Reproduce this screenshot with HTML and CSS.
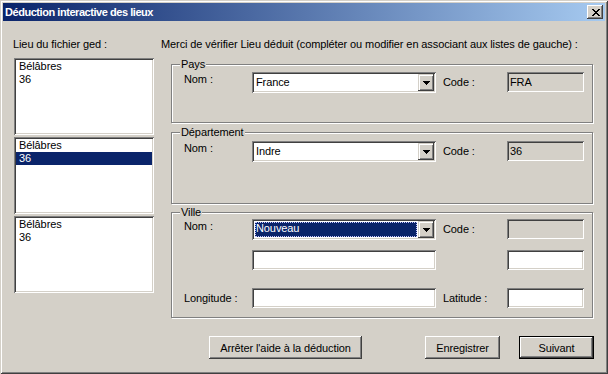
FILE: index.html
```html
<!DOCTYPE html>
<html lang="fr">
<head>
<meta charset="utf-8">
<title>Déduction interactive des lieux</title>
<link rel="stylesheet" href="styles.css">
</head>
<body>
<div class="window">
  <div class="titlebar">
    <span class="title">Déduction interactive des lieux</span>
    <div class="close">
      <svg width="8" height="7" viewBox="0 0 8 7" shape-rendering="crispEdges"><path d="M0 0h2v1H0zM6 0h2v1H6zM1 1h2v1H1zM5 1h2v1H5zM2 2h4v1H2zM3 3h2v1H3zM2 4h4v1H2zM1 5h2v1H1zM5 5h2v1H5zM0 6h2v1H0zM6 6h2v1H6z" fill="#000"/></svg>
    </div>
  </div>
  <div class="content">
    <div class="labels">
      <span class="lbl-left">Lieu du fichier ged :</span>
      <span class="lbl-right">Merci de vérifier Lieu déduit (compléter ou modifier en associant aux listes de gauche) :</span>
    </div>
    <div class="main">
      <div class="lists">
        <div class="listbox"><div class="item">Bélâbres</div><div class="item">36</div></div>
        <div class="listbox"><div class="item">Bélâbres</div><div class="item selected">36</div></div>
        <div class="listbox"><div class="item">Bélâbres</div><div class="item">36</div></div>
      </div>
      <div class="groups">
        <div class="group group-pays">
          <span class="legend">Pays</span>
          <div class="row">
            <span class="lbl nom">Nom :</span>
            <div class="combo"><span class="combo-text">France</span><span class="combo-btn"><svg width="7" height="4" viewBox="0 0 7 4" shape-rendering="crispEdges"><path d="M0 0h7v1H0zM1 1h5v1H1zM2 2h3v1H2zM3 3h1v1H3z" fill="#000"/></svg></span></div>
            <span class="lbl code">Code :</span>
            <div class="field readonly">FRA</div>
          </div>
        </div>
        <div class="group group-dept">
          <span class="legend">Département</span>
          <div class="row">
            <span class="lbl nom">Nom :</span>
            <div class="combo"><span class="combo-text">Indre</span><span class="combo-btn"><svg width="7" height="4" viewBox="0 0 7 4" shape-rendering="crispEdges"><path d="M0 0h7v1H0zM1 1h5v1H1zM2 2h3v1H2zM3 3h1v1H3z" fill="#000"/></svg></span></div>
            <span class="lbl code">Code :</span>
            <div class="field readonly">36</div>
          </div>
        </div>
        <div class="group group-ville">
          <span class="legend">Ville</span>
          <div class="row">
            <span class="lbl nom">Nom :</span>
            <div class="combo"><span class="combo-text selected-text"><span class="focus">Nouveau</span></span><span class="combo-btn"><svg width="7" height="4" viewBox="0 0 7 4" shape-rendering="crispEdges"><path d="M0 0h7v1H0zM1 1h5v1H1zM2 2h3v1H2zM3 3h1v1H3z" fill="#000"/></svg></span></div>
            <span class="lbl code">Code :</span>
            <div class="field readonly"></div>
          </div>
          <div class="row row2">
            <span class="lbl nom"></span>
            <div class="field wide"></div>
            <span class="lbl code"></span>
            <div class="field"></div>
          </div>
          <div class="row row3">
            <span class="lbl nom">Longitude :</span>
            <div class="field wide"></div>
            <span class="lbl code">Latitude :</span>
            <div class="field"></div>
          </div>
        </div>
      </div>
    </div>
    <div class="footer">
      <div class="btn btn-stop">Arrêter l'aide à la déduction</div>
      <div class="btn btn-save">Enregistrer</div>
      <div class="btn-default"><div class="btn btn-next">Suivant</div></div>
    </div>
  </div>
</div>
</body>
</html>
```

FILE: styles.css
```css
html, body {
  margin: 0;
  padding: 0;
  background: #d4d0c8;
}

body {
  font-family: "Liberation Sans", Arial, sans-serif;
  font-size: 11px;
  letter-spacing: -0.1px;
  color: #000;
}

.window {
  width: 608px;
  height: 374px;
  box-sizing: border-box;
  padding: 3px;
  background: #d4d0c8;
  box-shadow: inset 1px 1px 0 #d4d0c8, inset -1px -1px 0 #404040, inset 2px 2px 0 #ffffff, inset -2px -2px 0 #808080;
}

.titlebar {
  height: 18px;
  display: flex;
  align-items: center;
  justify-content: space-between;
  padding: 0 2px;
  background: linear-gradient(90deg, #0a246a 0%, #a6caf0 100%);
}

.title {
  color: #fff;
  font-weight: bold;
  font-size: 11px;
  letter-spacing: -0.45px;
  line-height: 13px;
}

.close {
  width: 16px;
  height: 14px;
  box-sizing: border-box;
  display: flex;
  align-items: center;
  justify-content: center;
  padding-left: 1px;
  background: #d4d0c8;
  box-shadow: inset -1px -1px 0 #404040, inset 1px 1px 0 #ffffff, inset -2px -2px 0 #808080;
}

.content {
  padding: 17px 0 0 10px;
}

.labels {
  display: flex;
  line-height: 13px;
}

.lbl-left {
  width: 148px;
}

.main {
  display: flex;
  margin-top: 7px;
}

.lists {
  margin-left: 1px;
  width: 140px;
  display: flex;
  flex-direction: column;
  gap: 2px;
}

.listbox {
  height: 77px;
  box-sizing: border-box;
  padding: 2px;
  background: #fff;
  box-shadow: inset 1px 1px 0 #808080, inset -1px -1px 0 #ffffff, inset 2px 2px 0 #404040, inset -2px -2px 0 #d4d0c8;
}

.item {
  line-height: 13px;
  padding-left: 3px;
}

.item.selected {
  background: #0a246a;
  color: #fff;
}

.groups {
  margin-left: 17px;
  width: 423px;
}

.group {
  position: relative;
  box-sizing: border-box;
  width: 422px;
  border: 1px solid #808080;
  box-shadow: 1px 1px 0 #ffffff, inset 1px 1px 0 #ffffff;
  padding-left: 12px;
}

.group-pays {
  margin-top: 6px;
  height: 59px;
  padding-top: 7px;
}

.group-dept {
  margin-top: 9px;
  height: 72px;
  padding-top: 8px;
}

.group-ville {
  margin-top: 8px;
  height: 106px;
  padding-top: 6px;
}

.legend {
  position: absolute;
  top: -7px;
  left: 8px;
  padding: 0 1px;
  line-height: 13px;
  background: #d4d0c8;
}

.row {
  display: flex;
  align-items: flex-start;
}

.row2 {
  margin-top: 10px;
}

.row3 {
  margin-top: 18px;
}

.lbl {
  line-height: 13px;
}

.lbl.nom {
  width: 68px;
  margin-top: 1px;
}

.lbl.code {
  width: 64px;
  margin-left: 7px;
  margin-top: 4px;
}

.row3 .lbl.nom,
.row3 .lbl.code {
  margin-top: 4px;
}

.combo {
  width: 184px;
  height: 21px;
  box-sizing: border-box;
  padding: 2px;
  display: flex;
  background: #fff;
  box-shadow: inset 1px 1px 0 #808080, inset -1px -1px 0 #ffffff, inset 2px 2px 0 #404040, inset -2px -2px 0 #d4d0c8;
}

.combo-text {
  flex: 1;
  padding-left: 2px;
  line-height: 17px;
}

.combo-text.selected-text {
  margin: 1px;
  padding: 0;
  background: #0a246a;
  color: #fff;
  display: flex;
}

.focus {
  flex: 1;
  line-height: 13px;
  padding-left: 1px;
  outline: 1px dotted #c8c8ff;
  outline-offset: -1px;
}

.combo-btn {
  width: 16px;
  height: 17px;
  box-sizing: border-box;
  display: flex;
  align-items: center;
  justify-content: center;
  padding-top: 1px;
  background: #d4d0c8;
  box-shadow: inset -1px -1px 0 #404040, inset 1px 1px 0 #d4d0c8, inset 2px 2px 0 #ffffff, inset -2px -2px 0 #808080;
}

.field {
  width: 77px;
  height: 20px;
  box-sizing: border-box;
  padding: 2px 3px;
  line-height: 16px;
  background: #fff;
  box-shadow: inset 1px 1px 0 #808080, inset -1px -1px 0 #ffffff, inset 2px 2px 0 #404040, inset -2px -2px 0 #d4d0c8;
}

.field.wide {
  width: 184px;
}

.field.readonly {
  background: #d4d0c8;
}

.footer {
  display: flex;
  align-items: center;
  margin-top: 18px;
  margin-left: 196px;
}

.btn {
  height: 23px;
  box-sizing: border-box;
  display: flex;
  align-items: center;
  justify-content: center;
  background: #d4d0c8;
  box-shadow: inset -1px -1px 0 #404040, inset 1px 1px 0 #ffffff, inset -2px -2px 0 #808080;
}

.btn-stop {
  width: 153px;
}

.btn-save {
  width: 75px;
  margin-left: 63px;
}

.btn-default {
  margin-left: 19px;
  border: 1px solid #000;
}

.btn-next {
  width: 73px;
  height: 21px;
}
```
